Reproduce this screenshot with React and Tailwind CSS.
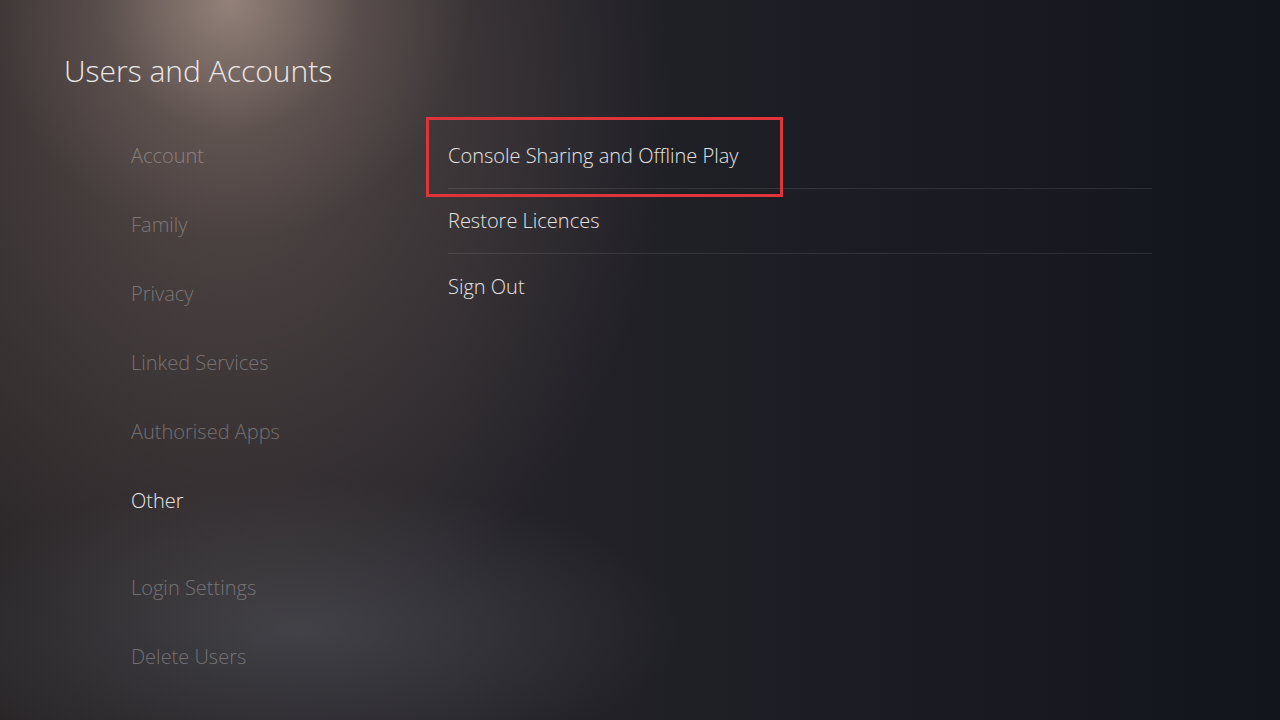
import React from 'react';

const sideItems = [
  { label: 'Account' },
  { label: 'Family' },
  { label: 'Privacy' },
  { label: 'Linked Services' },
  { label: 'Authorised Apps' },
  { label: 'Other', active: true },
  { label: 'Login Settings', gap: true },
  { label: 'Delete Users' },
];

const options = ['Console Sharing and Offline Play', 'Restore Licences', 'Sign Out'];

function SideMenu() {
  return (
    <div className="w-[448px] pl-[131px] flex flex-col">
      {sideItems.map(item => (
        <div
          key={item.label}
          className={`h-[69px] flex items-center text-[20px] ${item.gap ? 'mt-[18px]' : ''} ${
            item.active ? 'text-[#e9e7e6]' : 'text-[#ffffff]/30'
          }`}
        >
          {item.label}
        </div>
      ))}
    </div>
  );
}

function OptionList() {
  return (
    <div className="w-[704px] pt-[3px] flex flex-col">
      {options.map((label, i) => (
        <div
          key={label}
          className={`relative h-[65px] flex items-center text-[20px] text-[#e4e3e3] ${
            i < options.length - 1 ? 'border-b border-[#ffffff]/10' : ''
          }`}
        >
          {label}
          {/* 選択中の項目を囲む赤枠 */}
          {i === 0 && (
            <div className="absolute -left-[22px] -top-[7px] w-[357px] h-[80px] border-[3px] border-[#e0343b]" />
          )}
        </div>
      ))}
    </div>
  );
}

export default function App() {
  return (
    <div
      className="w-[1280px] h-[720px] overflow-hidden font-['Open_Sans','Noto_Sans',sans-serif] font-light bg-[#16171f] bg-[radial-gradient(ellipse_240px_240px_at_230px_0px,rgba(165,145,135,0.8),rgba(115,100,95,0.4)_55%,transparent_100%),radial-gradient(ellipse_440px_560px_at_230px_100px,rgba(100,86,82,0.75),transparent_100%),radial-gradient(ellipse_380px_150px_at_300px_630px,rgba(82,84,90,0.6),transparent_100%),linear-gradient(90deg,#2a2628_0%,#26242a_35%,#1a1b23_70%,#13151d_100%)]"
    >
      <h1 className="pt-[51px] pl-[64px] text-[30px] leading-[40px] text-[#ebe7e5]">
        Users and Accounts
      </h1>
      <div className="mt-[30px] flex">
        <SideMenu />
        <OptionList />
      </div>
    </div>
  );
}
